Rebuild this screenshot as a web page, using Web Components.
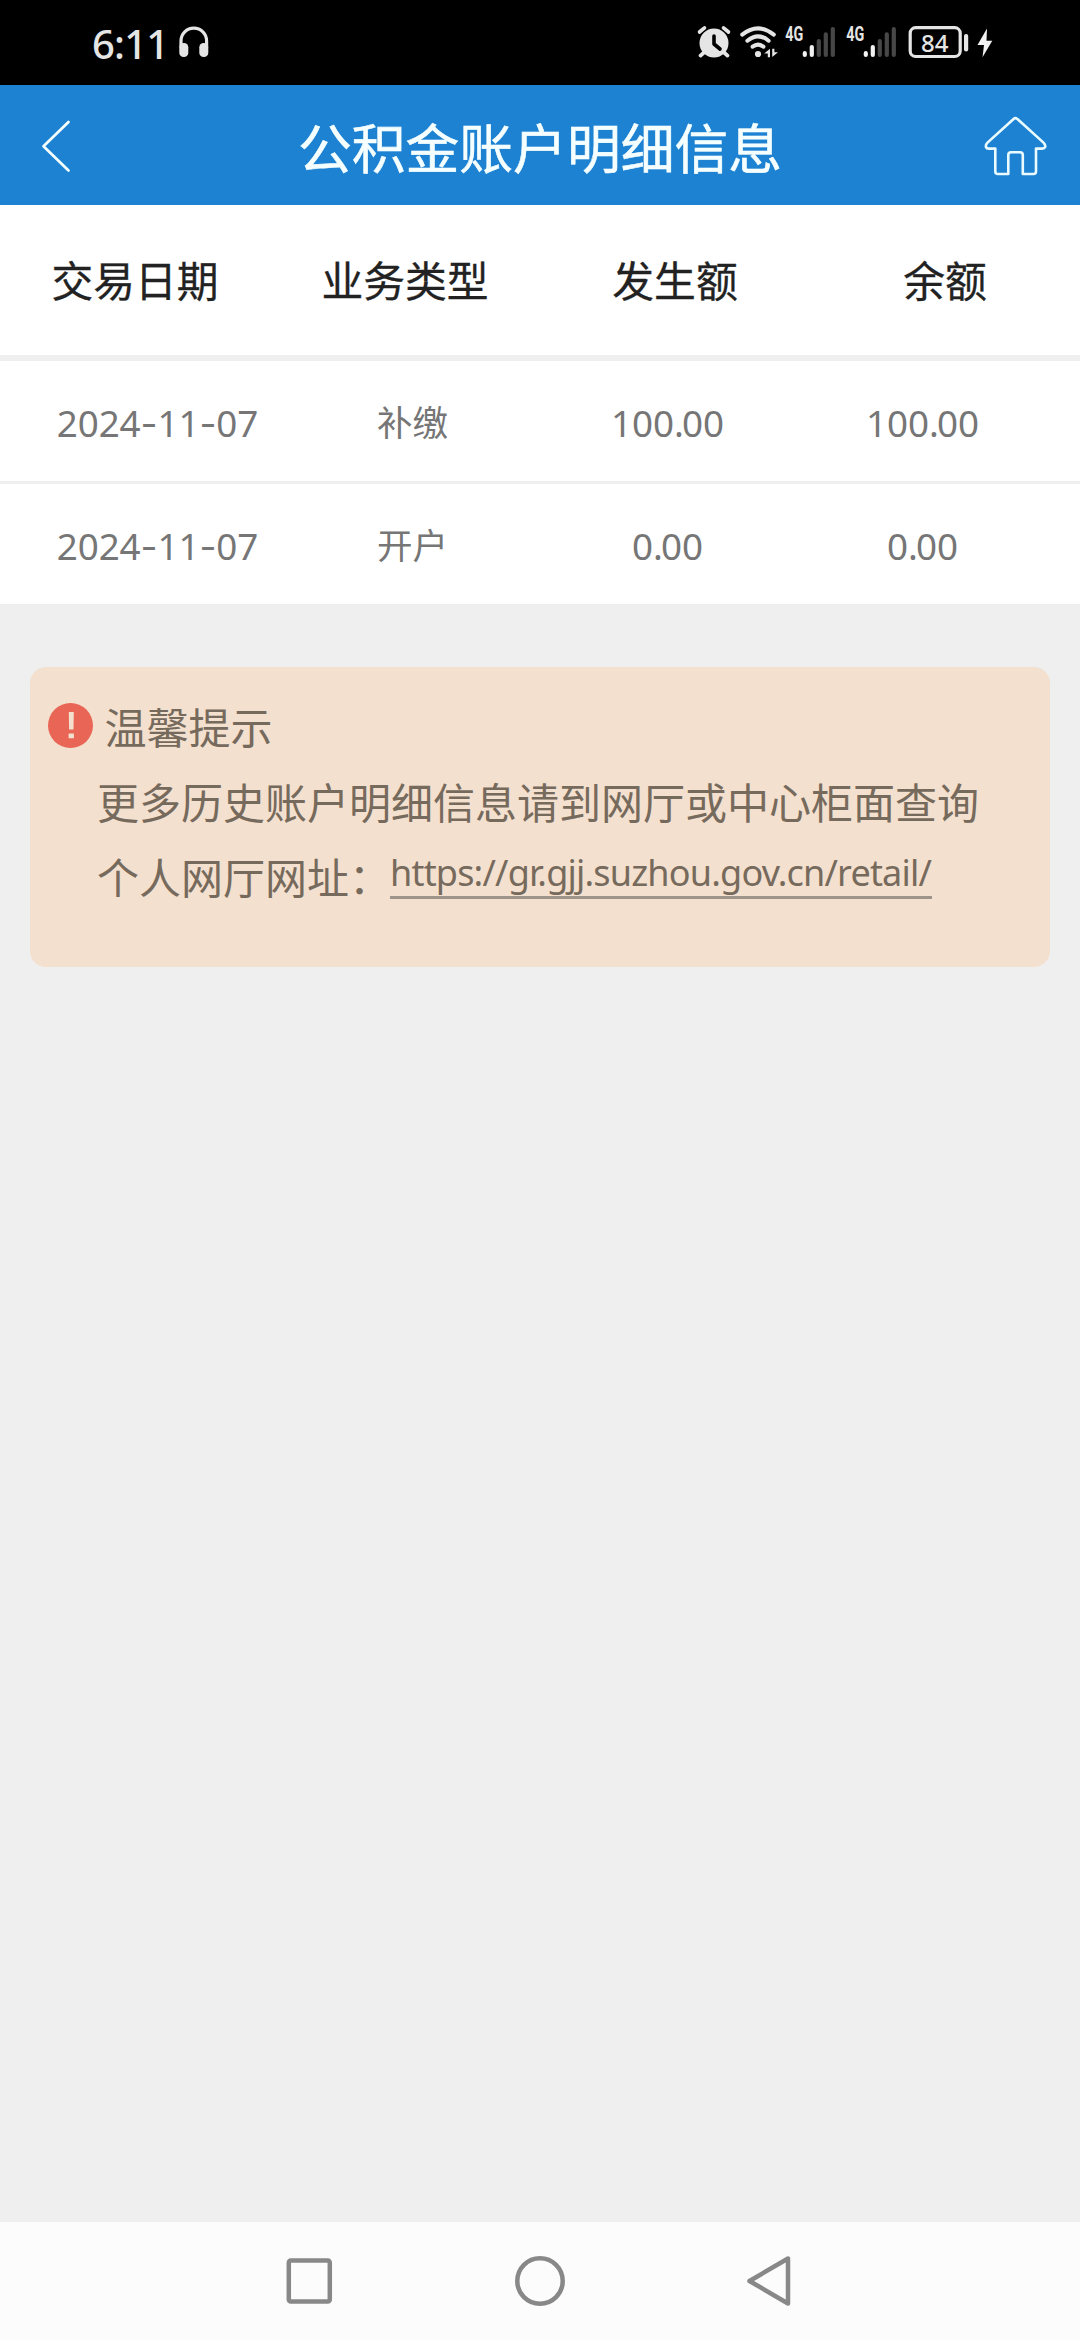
<!DOCTYPE html>
<html lang="zh-CN">
<head>
<meta charset="utf-8">
<title>公积金账户明细信息</title>
<style>
html,body{margin:0;height:100%}
body{font-family:"Noto Sans","Noto Sans CJK SC",sans-serif;background:#efefef}
</style>
</head>
<body>
<account-page>
  <status-bar></status-bar>
  <title-bar>公积金账户明细信息</title-bar>
  <record-head><span>交易日期</span><span>业务类型</span><span>发生额</span><span>余额</span></record-head>
  <record-row date="2024-11-07" type="补缴" amount="100.00" balance="100.00"></record-row>
  <record-row date="2024-11-07" type="开户" amount="0.00" balance="0.00"></record-row>
  <tip-card>
    <span slot="title">温馨提示</span>
    <span slot="text">更多历史账户明细信息请到网厅或中心柜面查询</span>
    <span slot="label">个人网厅网址：</span>
    <span slot="link">https://gr.gjj.suzhou.gov.cn/retail/</span>
  </tip-card>
  <nav-bar></nav-bar>
</account-page>
<script>
const define = (name, html) => customElements.define(name, class extends HTMLElement {
  constructor(){ super(); this.attachShadow({mode:'open'}).innerHTML = html; }
});

define('account-page', `<style>:host{display:flex;flex-direction:column;width:1080px;height:2340px;background:#efefef;overflow:hidden}</style><slot></slot>`);

const bars = x => `<g stroke-width="4.2" stroke-linecap="round"><path d="M${x} 53.2v1.7M${x+7} 47v8" stroke="#f2f2f2"/><path d="M${x+14} 41v14M${x+21} 34.3v20.7M${x+28} 29v26" stroke="#474747"/></g>`;
define('status-bar', `<style>
:host{display:flex;justify-content:space-between;height:85px;background:#000;color:#e5e5e5;box-sizing:border-box;padding:0 80px 0 92px;flex:none}
.left{display:flex}
.time{font-size:40px;font-weight:500;line-height:88px;letter-spacing:-.8px;width:84px;white-space:nowrap}
svg{display:block;height:85px}
</style>
<div class="left"><div class="time">6:11</div>
<svg width="36" viewBox="176 0 36 85"><path d="M181 47v-6a12.8 12.8 0 0 1 25.600 0v6" fill="none" stroke="#e5e5e5" stroke-width="3.2"/><rect x="179.300" y="43" width="9" height="14" rx="4.300" fill="#e5e5e5"/><rect x="199.300" y="43" width="9" height="14" rx="4.300" fill="#e5e5e5"/></svg></div>
<svg width="310" viewBox="689 0 310 85" fill="none">
<g stroke="#e5e5e5" stroke-linecap="round"><circle cx="713" cy="43" r="14.500" fill="#e5e5e5" stroke="none"/><path d="M698.500 32l5-4.200M727.500 32l-5-4.200" stroke-width="3.600"/><path d="M703.500 52l-4 3.600M722.500 52l4 3.600" stroke-width="3.800"/><path d="M713 36v8l6 5" stroke="#000" stroke-width="3.600" stroke-linejoin="round"/></g>
<g stroke="#e5e5e5" stroke-width="4" stroke-linecap="round"><path d="M741.200 34.600q15.800-12.500 31.600 0M746.400 40.700q10.600-8.700 21.200 0M751.600 46.700q5.400-4.200 10.800 0"/></g><circle cx="757" cy="54" r="3.100" fill="#e5e5e5"/>
<path d="M763.200 53.500l5.800-4.700v8.400h-2.200v-3.700zM777 52.300l-5.800 4.700v-8.200h2.200v3.500z" fill="#e5e5e5"/>
<g fill="#e5e5e5" font-family="Roboto" font-weight="700" font-size="20.500"><text x="784.300" y="41" textLength="18" lengthAdjust="spacingAndGlyphs">4G</text><text x="845.300" y="41" textLength="18" lengthAdjust="spacingAndGlyphs">4G</text></g>
${bars(803.800)}${bars(864.800)}
<rect x="909.200" y="27.700" width="50" height="28.800" rx="5.500" stroke="#e5e5e5" stroke-width="3.200"/><rect x="963" y="34" width="4.200" height="17.500" rx="2" fill="#e5e5e5"/>
<text x="920" y="51.500" font-family="Noto Sans" font-size="24" font-weight="500" fill="#e5e5e5" textLength="27.500">84</text>
<path d="M986 28.500L976.500 45h6.500l-1.500 12.200L991.300 40.800h-5.800z" fill="#f2f2f2"/>
</svg>`);

define('title-bar', `<style>
:host{display:flex;align-items:center;height:120px;background:#1e82d2;color:#f6ffff;flex:none}
svg{flex:none;display:block}
h1{flex:1;margin:0;text-align:center;font:400 53.800px/119px "Noto Sans CJK SC",sans-serif;white-space:nowrap;-webkit-text-stroke:.6px currentColor}
</style>
<svg width="120" height="120" viewBox="0 85 120 120" fill="none" stroke="#f6ffff" stroke-width="2.700" stroke-linecap="round" stroke-linejoin="round"><path d="M68.500 122L43.500 146.300 68.500 170.500"/></svg>
<h1><slot></slot></h1>
<svg width="120" height="120" viewBox="960 85 120 120" fill="none" stroke="#e9fbff" stroke-width="2.600" stroke-linejoin="round"><path d="M1013.300 119.200Q1015.500 117.200 1017.700 119.200L1043.500 142.600Q1045.700 145 1045.200 147Q1044.500 148.600 1042 148.600H1036V171.500Q1036 174 1033.500 174H1022.800V155Q1022.800 152.200 1020 152.200H1011Q1008.300 152.200 1008.300 155V174H998Q995.300 174 995.300 171.500V148.600H989Q986.500 148.600 986 147Q985.300 145 987.500 142.600Z"/></svg>`);

define('record-head', `<style>
:host{display:grid;grid-template-columns:repeat(4,1fr);height:150px;background:#fff;border-bottom:6px solid #efefef;color:#222;font:400 41.800px/149px "Noto Sans CJK SC",sans-serif;text-align:center;flex:none;-webkit-text-stroke:.3px currentColor}
</style><slot></slot>`);

customElements.define('record-row', class extends HTMLElement {
  connectedCallback(){
    const cell = k => this.getAttribute(k).replace(/-/g,'<i>-</i>').replace(/\./g,'<b>.</b>');
    this.attachShadow({mode:'open'}).innerHTML = `<style>
:host{display:grid;grid-template-columns:repeat(4,255px);padding:0 30px;height:120px;background:#fff;border-bottom:3px solid #efefef;color:#767676;font:400 36.800px/125px "Noto Sans",sans-serif;text-align:center;flex:none}
:host(:last-of-type){border-bottom:0}
span{white-space:nowrap}
.type{font:400 35.500px/119px "Noto Sans CJK SC",sans-serif}
.date{letter-spacing:-.1px}
i{font:400 37px "Inter"}
b{font-weight:400;letter-spacing:-2px}
</style><span class="date">${cell('date')}</span><span class="type">${cell('type')}</span><span>${cell('amount')}</span><span>${cell('balance')}</span>`;
  }
});

define('tip-card', `<style>
:host{display:block;margin:63px 30px 0;height:300px;box-sizing:border-box;padding:21px 0 0 18px;border-radius:16px;background:#f4e0ce;color:#766a5d;font:400 42px/75px "Noto Sans CJK SC",sans-serif;flex:none;white-space:nowrap}
.title{display:flex;gap:11.500px}
.title svg{margin-top:15px}
.line{display:flex;padding-left:49px}
.link{font:400 36px/46px "Noto Sans";height:46px;border-bottom:3px solid #9d948c;margin-top:12px;width:542px;letter-spacing:-.8px}
.label{width:293px}
</style>
<div class="title"><svg width="45" height="45" viewBox="0 0 45 45"><circle cx="22.500" cy="22.500" r="22.500" fill="#e96656"/><path d="M20.800 9h5l-.3 17.500h-4.400zM20.600 30.500h5.300v4.700h-5.300z" fill="#f4e0ce"/></svg><slot name="title"></slot></div>
<div class="line"><slot name="text"></slot></div>
<div class="line"><div class="label"><slot name="label"></slot></div><div class="link"><slot name="link"></slot></div></div>`);

define('nav-bar', `<style>
:host{display:flex;justify-content:center;align-items:center;gap:170px;height:118px;margin-top:auto;background:#fcfcfc;flex:none}
svg{display:block}
</style>
<svg width="60" height="60" fill="none" stroke="#888" stroke-width="4.500"><rect x="8.800" y="9.500" width="41" height="41" rx="2"/></svg>
<svg width="60" height="60" fill="none" stroke="#888" stroke-width="4.500"><circle cx="30" cy="30" r="22.700"/></svg>
<svg width="60" height="60" fill="none" stroke="#888" stroke-width="4.500" stroke-linejoin="round"><path d="M48 7.500V52.500L9.500 30Z"/></svg>`);
</script>
</body>
</html>
